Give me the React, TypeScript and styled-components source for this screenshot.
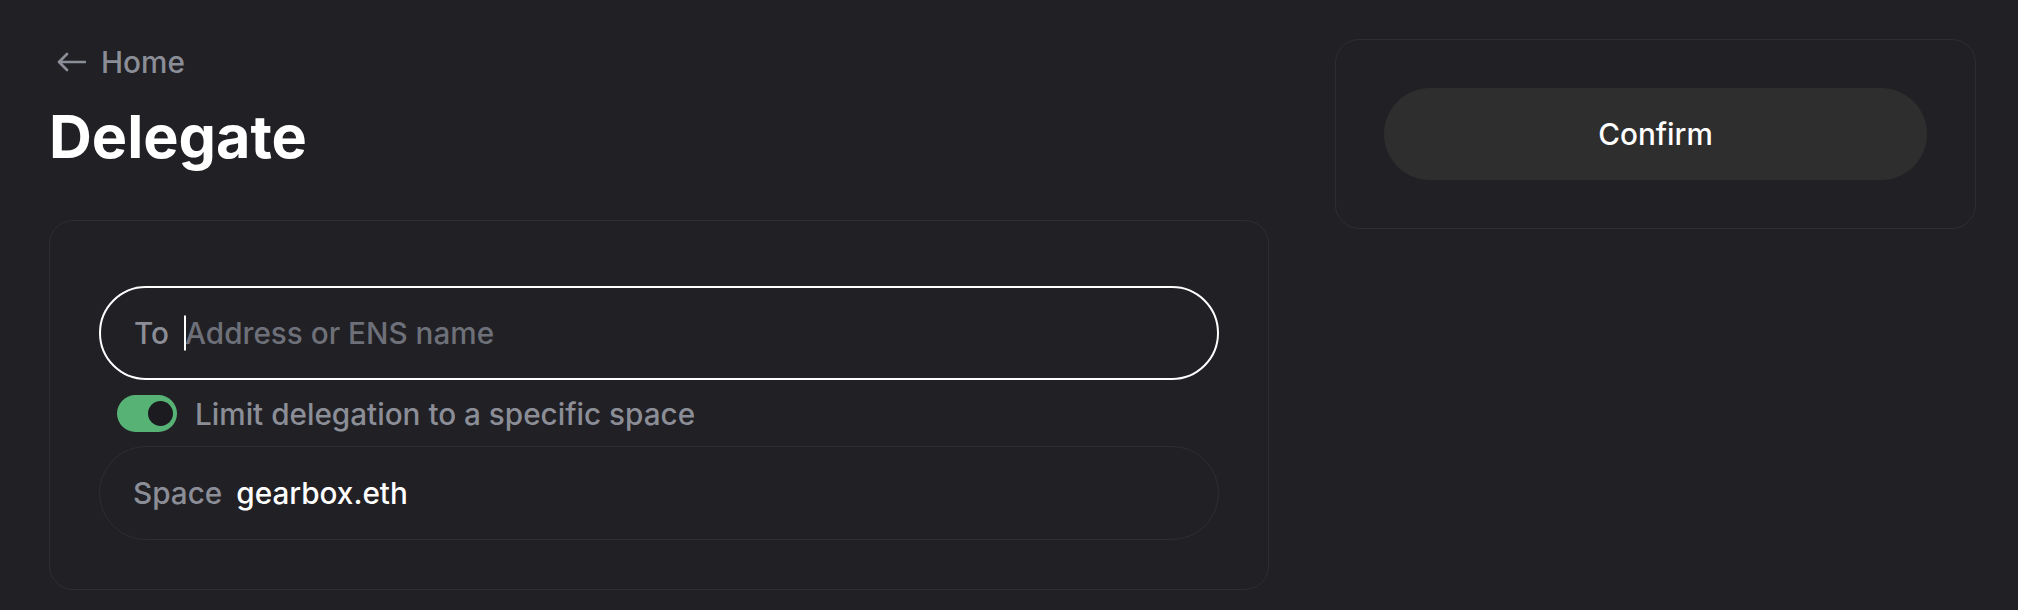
import React from "react";
import styled, { createGlobalStyle } from "styled-components";

const GlobalStyle = createGlobalStyle`
  html, body { margin: 0; padding: 0; background: #212025; }
  body {
    font-family: Inter, "Noto Sans", sans-serif;
    color: #fff;
    -webkit-font-smoothing: antialiased;
  }
  * { box-sizing: border-box; }
`;

const Page = styled.div`
  display: flex;
  align-items: flex-start;
  gap: 66px;
  padding: 39px 42px 0 49px;
  min-height: 610px;
  background: #212025;
`;

const Main = styled.main`
  flex: 1;
  min-width: 0;
  display: flex;
  flex-direction: column;
`;

const BackLink = styled.a`
  display: inline-flex;
  align-items: center;
  gap: 15px;
  align-self: flex-start;
  margin-left: 8px;
  height: 46px;
  font-size: 29.7px;
  font-weight: 500;
  line-height: 46px;
  color: #8b8e97;
  text-decoration: none;
  cursor: pointer;
`;

const Title = styled.h1`
  margin: 16px 0 0;
  font-size: 59.3px;
  line-height: 72px;
  font-weight: 700;
  color: #fff;
`;

const Card = styled.section`
  margin-top: 47px;
  border: 1px solid #2e2d33;
  border-radius: 24px;
  padding: 65px 49px 49px;
  display: flex;
  flex-direction: column;
`;

const Field = styled.label<{ $active?: boolean }>`
  display: flex;
  align-items: center;
  gap: ${(p) => (p.$active ? 16 : 14)}px;
  height: 94px;
  padding: 0 33px;
  border: ${(p) => (p.$active ? "2px solid #ffffff" : "1px solid #2e2d33")};
  border-radius: 999px;
  font-size: 29.7px;
  font-weight: 500;
  line-height: 36px;
`;

const FieldLabel = styled.span`
  color: #8b8e97;
  flex: none;
`;

const InputWrap = styled.span`
  position: relative;
  flex: 1;
  display: flex;
  align-items: center;
`;

const Caret = styled.span`
  position: absolute;
  left: -1px;
  top: 50%;
  width: 2px;
  height: 35px;
  transform: translateY(-50%);
  background: #ffffff;
`;

const TextInput = styled.input`
  flex: 1;
  min-width: 0;
  padding: 0;
  border: none;
  outline: none;
  background: transparent;
  color: #fff;
  font: inherit;
  caret-color: transparent;
  &::placeholder {
    color: #6e7079;
  }
`;

const Value = styled.span`
  color: #fff;
`;

const ToggleRow = styled.div`
  display: flex;
  align-items: center;
  gap: 18px;
  height: 37px;
  margin: 15px 0 14px 18px;
  font-size: 29.7px;
  font-weight: 500;
  color: #8b8e97;
`;

const Switch = styled.span<{ $on: boolean }>`
  display: flex;
  align-items: center;
  justify-content: ${(p) => (p.$on ? "flex-end" : "flex-start")};
  width: 60px;
  height: 37px;
  padding: 0 4px;
  border-radius: 999px;
  background: ${(p) => (p.$on ? "#57b375" : "#3a3940")};
  flex: none;
`;

const Knob = styled.span`
  width: 25px;
  height: 25px;
  border-radius: 50%;
  background: #1c1b20;
`;

const Aside = styled.aside`
  width: 641px;
  flex: none;
  border: 1px solid #2e2d33;
  border-radius: 24px;
  padding: 48px;
`;

const ConfirmButton = styled.button`
  display: flex;
  align-items: center;
  justify-content: center;
  width: 100%;
  height: 92px;
  border: none;
  border-radius: 999px;
  background: #2e2e2e;
  color: #fff;
  font-family: inherit;
  font-size: 29.7px;
  font-weight: 500;
  cursor: pointer;
`;

const ArrowIcon = () => (
  <svg width="29" height="20" viewBox="0 0 29 20" fill="none">
    <path
      d="M28 10H2M10 2L2 10l8 8"
      stroke="#8b8e97"
      strokeWidth="2.6"
      strokeLinecap="round"
      strokeLinejoin="round"
    />
  </svg>
);

export default function App() {
  return (
    <>
      <GlobalStyle />
      <Page>
        <Main>
          <BackLink>
            <ArrowIcon />
            Home
          </BackLink>
          <Title>Delegate</Title>
          <Card>
            <Field $active>
              <FieldLabel>To</FieldLabel>
              <InputWrap>
                <Caret />
                <TextInput placeholder="Address or ENS name" />
              </InputWrap>
            </Field>
            <ToggleRow>
              <Switch $on>
                <Knob />
              </Switch>
              Limit delegation to a specific space
            </ToggleRow>
            <Field>
              <FieldLabel>Space</FieldLabel>
              <Value>gearbox.eth</Value>
            </Field>
          </Card>
        </Main>
        <Aside>
          <ConfirmButton>Confirm</ConfirmButton>
        </Aside>
      </Page>
    </>
  );
}
